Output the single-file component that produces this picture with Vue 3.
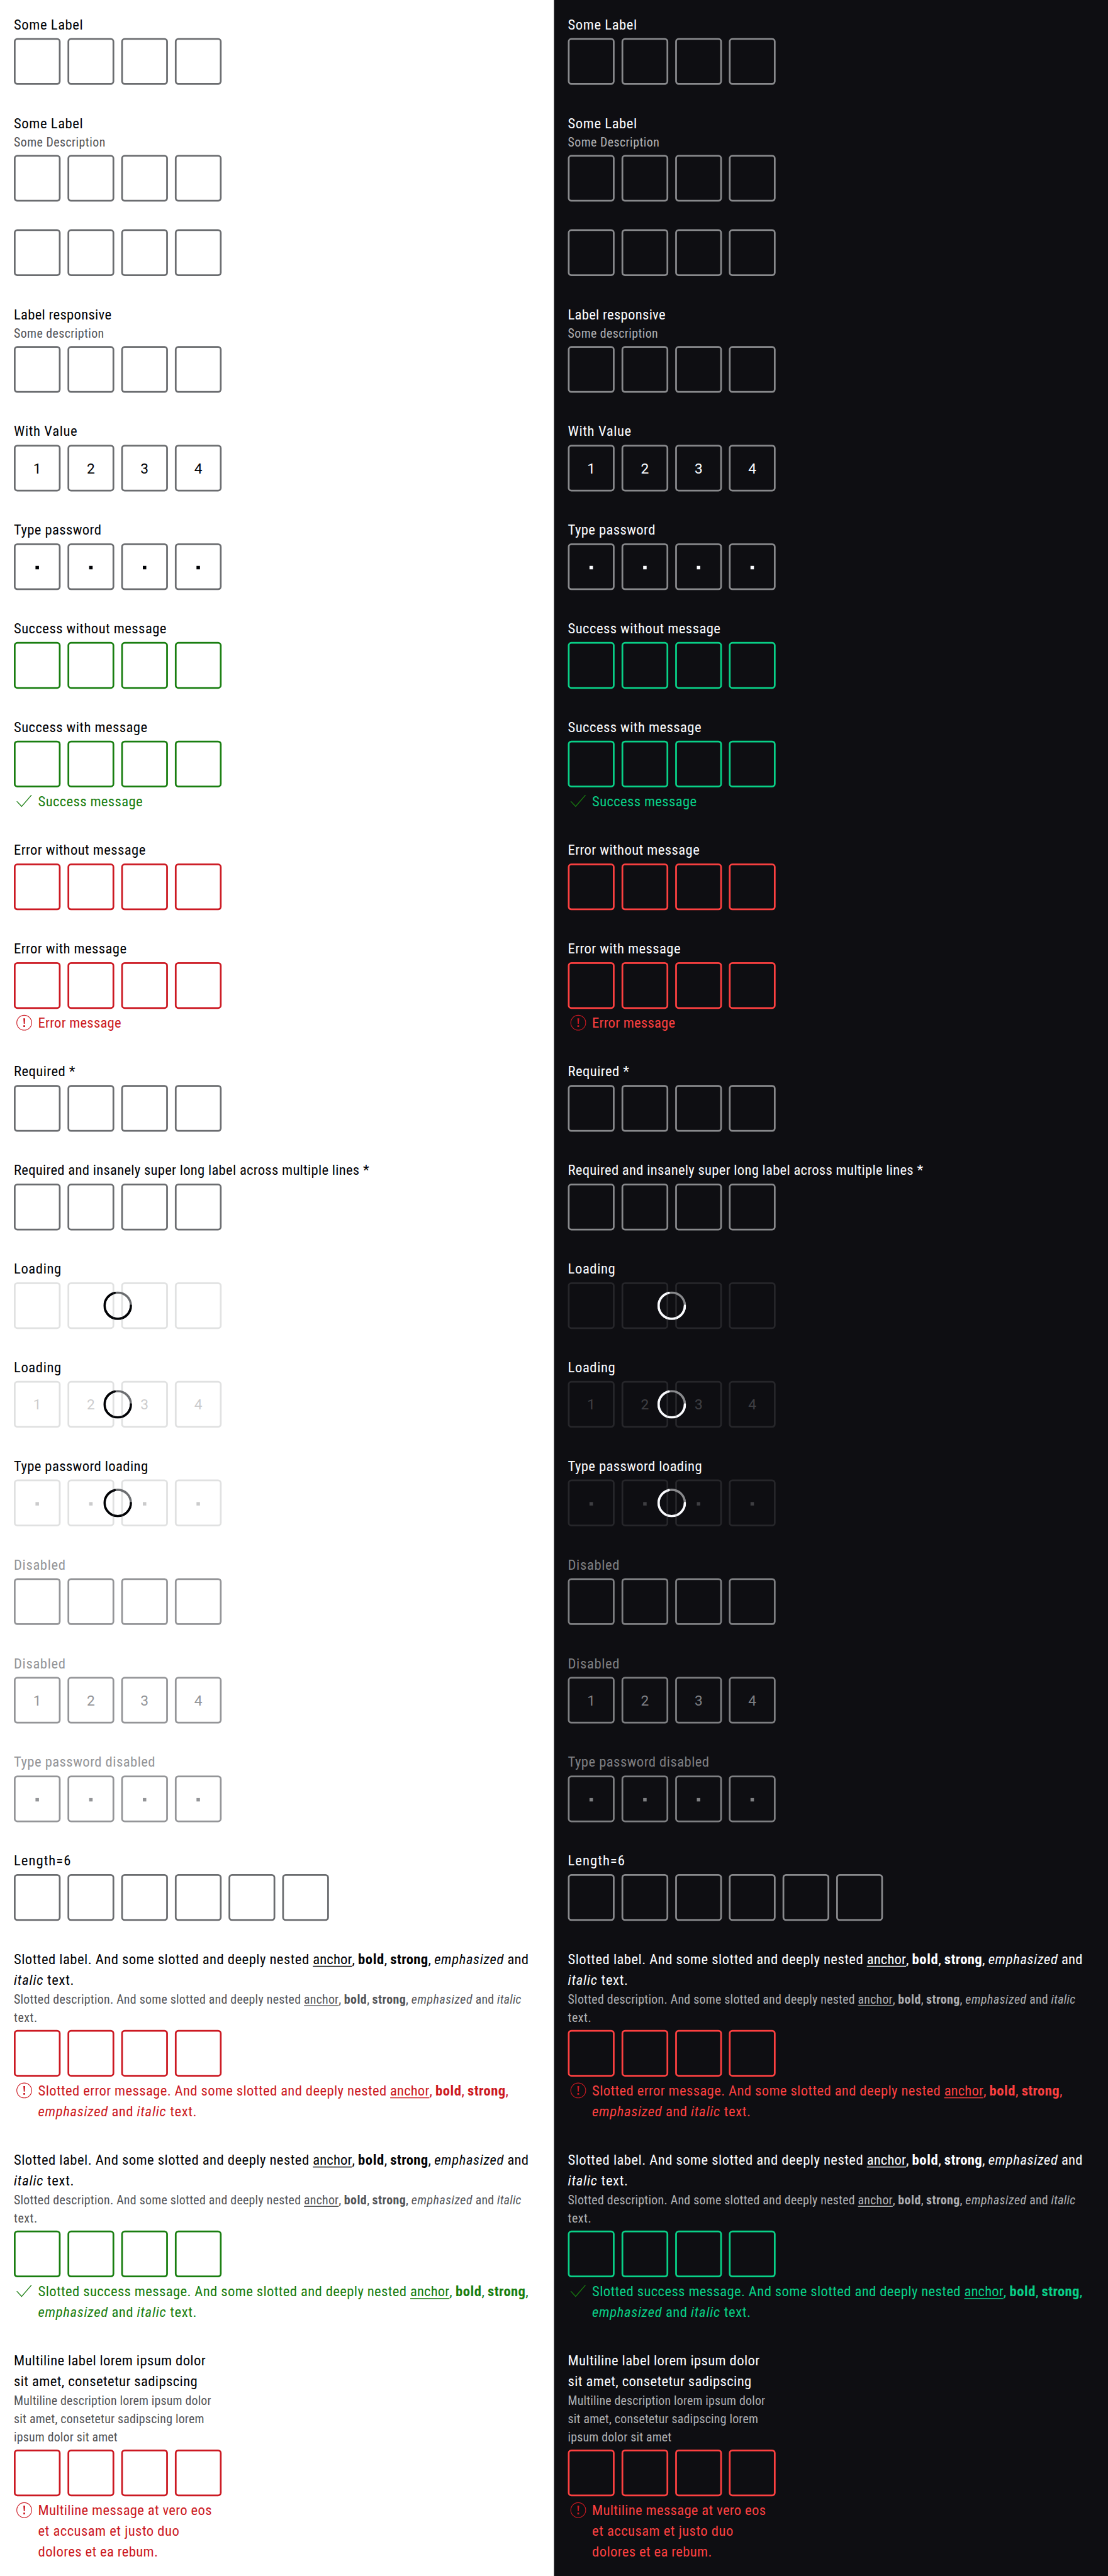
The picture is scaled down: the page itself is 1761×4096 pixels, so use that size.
<script setup>
const themes = ['light', 'dark']

// Text is a list of lines, each line a list of runs: [text, tracking in em, kind]
const plain = (text, tracking) => [[[text, tracking]]]

const spacing = (run) => ({ letterSpacing: (run[1] * 0.97 - 0.0122).toFixed(4) + 'em' })

const slottedLabel = [
  [
    ['Slotted label. And some slotted and deeply nested ', 0.0321],
    ['anchor', 0.0175, 'anchor'],
    [', ', 0.01],
    ['bold', 0.036, 'bold'],
    [', ', 0.01],
    ['strong', 0.028, 'bold'],
    [', ', 0.01],
    ['emphasized', 0.04, 'italic'],
    [' and', 0.025],
  ],
  [['italic', 0.049, 'italic'], [' text.', 0.04]],
]
const slottedDescription = [
  [
    ['Slotted description. And some slotted and deeply nested ', 0.0253],
    ['anchor', 0.0237, 'anchor'],
    [', ', 0.01],
    ['bold', 0.037, 'bold'],
    [', ', 0.01],
    ['strong', 0.034, 'bold'],
    [', ', 0.02],
    ['emphasized', 0.041, 'italic'],
    [' and ', 0.02],
    ['italic', 0.028, 'italic'],
  ],
  [['text.', 0.04]],
]
const slottedMessage = (lead, tracking) => [
  [
    [lead + ' And some slotted and deeply nested ', tracking],
    ['anchor', 0.0175, 'anchor'],
    [', ', 0.01],
    ['bold', 0.036, 'bold'],
    [', ', 0.01],
    ['strong', 0.028, 'bold'],
    [',', 0],
  ],
  [['emphasized', 0.042, 'italic'], [' and ', 0.032], ['italic', 0.047, 'italic'], [' text.', 0.038]],
]

const digits = ['1', '2', '3', '4']

const fields = [
  { label: plain('Some Label', 0.037) },
  { label: plain('Some Label', 0.037), description: plain('Some Description', 0.036) },
  {},
  { label: plain('Label responsive', 0.025), description: plain('Some description', 0.034) },
  { label: plain('With Value', 0.0395), values: digits },
  { label: plain('Type password', 0.0297), password: true },
  { label: plain('Success without message', 0.0312), state: 'success' },
  { label: plain('Success with message', 0.0312), state: 'success', message: plain('Success message', 0.0275) },
  { label: plain('Error without message', 0.0302), state: 'error' },
  { label: plain('Error with message', 0.0302), state: 'error', message: plain('Error message', 0.022) },
  { label: plain('Required *', 0.0313) },
  { label: plain('Required and insanely super long label across multiple lines *', 0.0241) },
  { label: plain('Loading', 0.039), loading: true },
  { label: plain('Loading', 0.039), loading: true, values: digits },
  { label: plain('Type password loading', 0.0293), loading: true, password: true },
  { label: plain('Disabled', 0.0405), disabled: true },
  { label: plain('Disabled', 0.0405), disabled: true, values: digits },
  { label: plain('Type password disabled', 0.032), disabled: true, password: true },
  { label: plain('Length=6', 0.058), length: 6 },
  {
    label: slottedLabel,
    description: slottedDescription,
    state: 'error',
    message: slottedMessage('Slotted error message.', 0.0282),
  },
  {
    label: slottedLabel,
    description: slottedDescription,
    state: 'success',
    message: slottedMessage('Slotted success message.', 0.0284),
  },
  {
    label: [
      [['Multiline label lorem ipsum dolor', 0.0286]],
      [['sit amet, consetetur sadipscing', 0.0293]],
    ],
    description: [
      [['Multiline description lorem ipsum dolor', 0.0217]],
      [['sit amet, consetetur sadipscing lorem', 0.0233]],
      [['ipsum dolor sit amet', 0.0218]],
    ],
    state: 'error',
    message: [
      [['Multiline message at vero eos', 0.0262]],
      [['et accusam et justo duo', 0.0325]],
      [['dolores et ea rebum.', 0.0279]],
    ],
  },
]
</script>

<template>
  <div class="viewport">
    <div class="page">
      <section v-for="theme in themes" :key="theme" class="panel" :class="theme">
        <div
          v-for="(field, i) in fields"
          :key="i"
          class="field"
          :class="[field.state, { loading: field.loading, disabled: field.disabled }]"
        >
          <div v-if="field.label" class="label">
            <div v-for="(line, l) in field.label" :key="l" class="line"><span
              v-for="(run, r) in line"
              :key="r"
              :class="run[2]"
              :style="spacing(run)"
            >{{ run[0] }}</span></div>
          </div>
          <div v-if="field.description" class="description">
            <div v-for="(line, l) in field.description" :key="l" class="line"><span
              v-for="(run, r) in line"
              :key="r"
              :class="run[2]"
              :style="spacing(run)"
            >{{ run[0] }}</span></div>
          </div>
          <div class="pins">
            <svg v-if="field.loading" class="spinner" viewBox="0 0 66 66">
              <circle class="track" cx="33" cy="33" r="30.4" />
              <circle class="arc" cx="33" cy="33" r="30.4" pathLength="360" stroke-dasharray="255 105" />
            </svg>
            <div v-for="n in field.length || 4" :key="n" class="pin">
              <span v-if="field.values" class="digit">{{ field.values[n - 1] }}</span>
              <span v-else-if="field.password" class="dot"></span>
            </div>
          </div>
          <div v-if="field.message" class="message">
            <svg class="icon" viewBox="0 0 24 24">
              <path v-if="field.state === 'success'" d="M20.9 5 9 18.75 2.9 12.1h1.25L9 17.35 19.7 5z" />
              <g v-else>
                <circle cx="12" cy="12" r="8.6" />
                <path d="M11 7h2.1l-.45 6.4h-1.2zM11 15h2v2h-2z" />
              </g>
            </svg>
            <div class="message-text">
              <div v-for="(line, l) in field.message" :key="l" class="line"><span
                v-for="(run, r) in line"
                :key="r"
                :class="run[2]"
                :style="spacing(run)"
              >{{ run[0] }}</span></div>
            </div>
          </div>
        </div>
      </section>
    </div>
  </div>
</template>

<style>
html,
body {
  margin: 0;
  background: #fff;
}
</style>

<style scoped>
.viewport {
  width: 1761px;
  height: 4096px;
  overflow: hidden;
}

.page {
  display: flex;
  width: 2560px;
  height: 5954px;
  transform: scale(0.68790);
  transform-origin: 0 0;
  font-family: Roboto, 'Liberation Sans', sans-serif;
}

.panel {
  --success-icon: #197e10;
  --error-icon: #cc1922;
  box-sizing: border-box;
  display: flex;
  flex-direction: column;
  gap: 64px;
  width: 1280px;
  height: 5956px;
  padding: 32px;
  color: var(--primary);
  background: var(--background);
}

.light {
  --background: #fff;
  --primary: #010205;
  --medium: #535457;
  --border: #6b6d70;
  --disabled: #949598;
  --success: #197e10;
  --error: #cc1922;
}

.dark {
  --background: #0e0e12;
  --primary: #fbfcff;
  --medium: #afb0b3;
  --border: #88898c;
  --disabled: #7e7f82;
  --success: #09d087;
  --error: #fc4040;
}

.field {
  --state: var(--border);
}

.success {
  --state: var(--success);
}

.error {
  --state: var(--error);
}

.disabled {
  --state: var(--disabled);
  color: var(--disabled);
}

.label {
  padding: 1px 0 7px;
  font-size: 33px;
  line-height: 48px;
  font-stretch: 75%;
}

.description {
  margin-top: -8px;
  padding-bottom: 8px;
  color: var(--medium);
  font-size: 28.9px;
  line-height: 42px;
  font-stretch: 75%;
}

.line {
  white-space: pre;
}

.anchor {
  text-decoration: underline;
  text-decoration-thickness: 2px;
  text-underline-offset: 4px;
}

.bold {
  font-weight: 700;
}

.italic {
  font-style: italic;
}

.pins {
  position: relative;
  display: flex;
  gap: 16px;
  width: max-content;
}

.pin {
  position: relative;
  box-sizing: border-box;
  display: flex;
  align-items: center;
  justify-content: center;
  width: 108px;
  height: 108px;
  border: 4px solid var(--state);
  border-radius: 8px;
}

.loading .pin {
  opacity: 0.2;
}

.digit {
  padding-top: 2px;
  font-size: 33px;
  line-height: 48px;
}

.dot {
  width: 8px;
  height: 8px;
  margin-top: 4px;
  background: currentColor;
}

.spinner {
  position: absolute;
  top: 21px;
  left: 207px;
  width: 66px;
  height: 66px;
  fill: none;
  stroke-width: 5.2;
}

.track {
  stroke: var(--border);
}

.arc {
  stroke: var(--primary);
  stroke-linecap: round;
}

.message {
  display: flex;
  gap: 8px;
  padding-top: 8px;
  color: var(--state);
  font-size: 33px;
  line-height: 48px;
  font-stretch: 75%;
}

.message-text {
  margin: 1px 0 -1px;
}

.icon {
  flex: none;
  width: 48px;
  height: 48px;
}

.success .icon {
  fill: var(--success-icon);
}

.error .icon {
  fill: var(--error-icon);
}

.error .icon circle {
  fill: none;
  stroke: var(--error-icon);
  stroke-width: 0.8;
}
</style>
